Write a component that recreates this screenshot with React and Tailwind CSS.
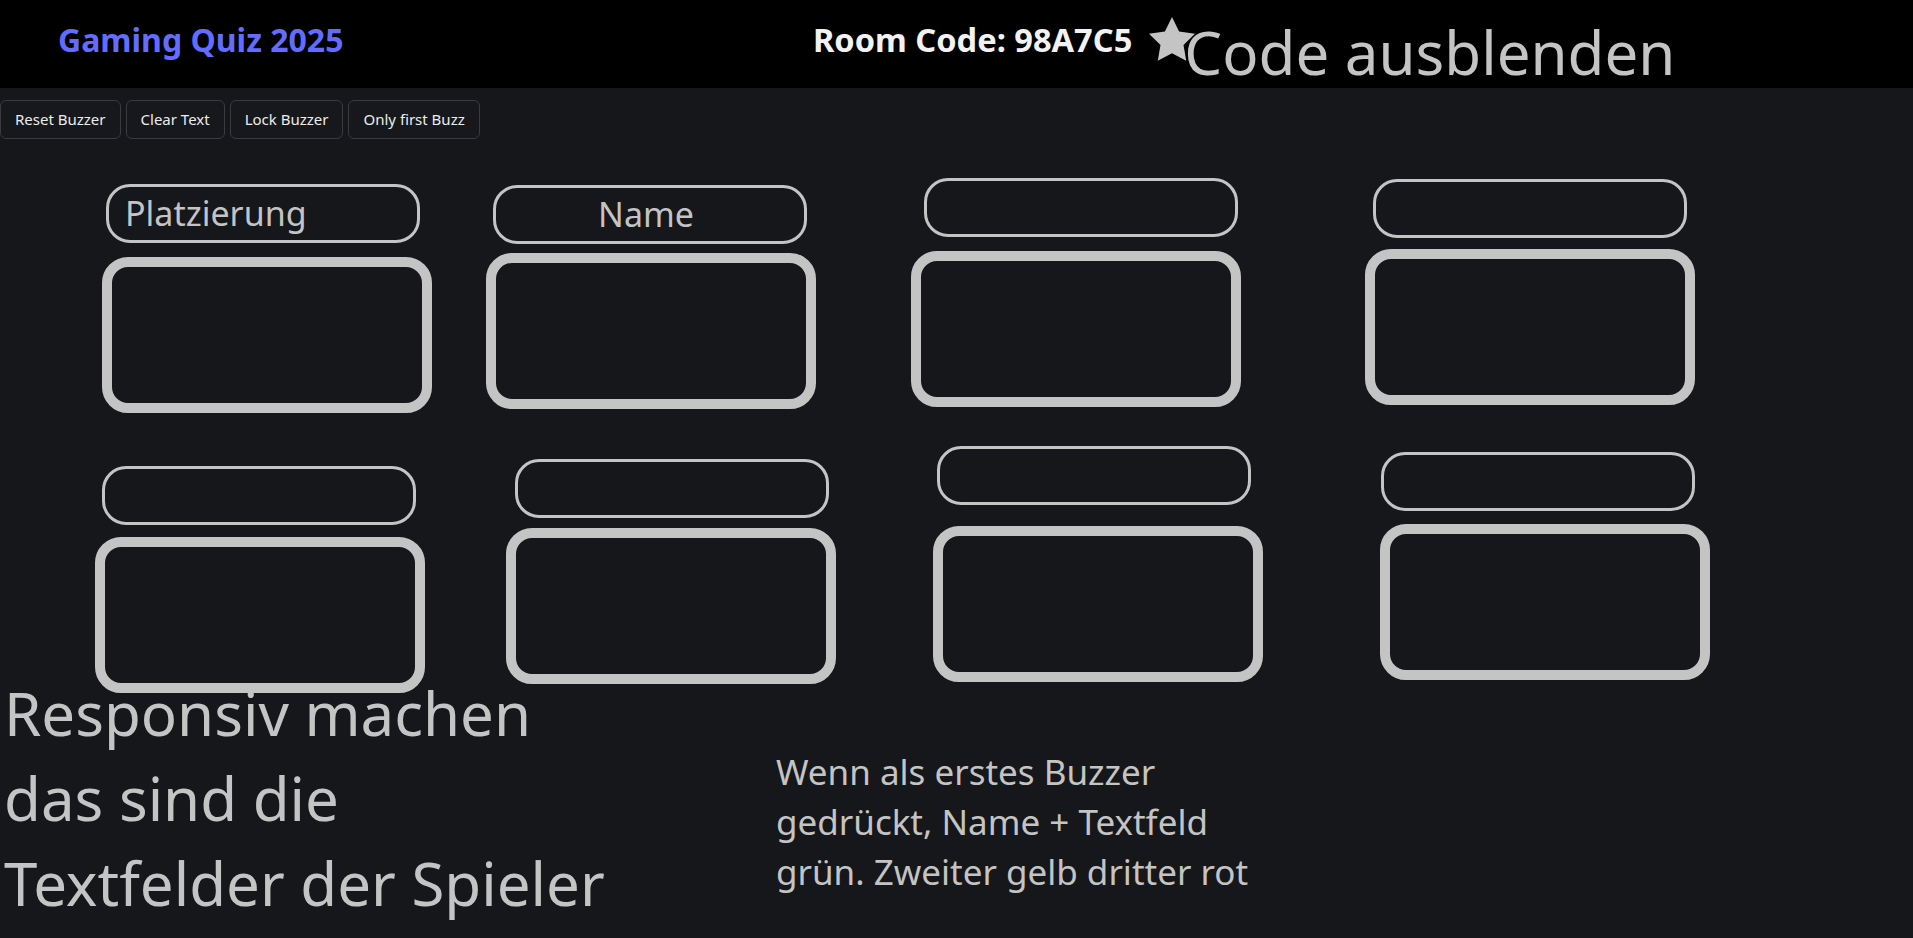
import React from 'react';

const font = { fontFamily: '"Noto Sans", "Open Sans", sans-serif' };

const buttons = ['Reset Buzzer', 'Clear Text', 'Lock Buzzer', 'Only first Buzz'];

// hand placed player fields, two rows of four
const rowOne = [
  { cell: 'ml-[102px]', label: 'mt-[45px] ml-[4px]', box: 'mt-[14px]', text: 'Platzierung', align: 'text-left pl-[16px]' },
  { cell: 'ml-[54px]', label: 'mt-[46px] ml-[7px]', box: 'mt-[9px]', text: 'Name', align: 'text-center pr-[8px]' },
  { cell: 'ml-[95px]', label: 'mt-[39px] ml-[13px]', box: 'mt-[14px]', text: '', align: '' },
  { cell: 'ml-[124px]', label: 'mt-[40px] ml-[8px]', box: 'mt-[11px]', text: '', align: '' },
];

const rowTwo = [
  { cell: 'ml-[95px]', label: 'mt-[53px] ml-[7px]', box: 'mt-[12px]', text: '', align: '' },
  { cell: 'ml-[81px]', label: 'mt-[46px] ml-[9px]', box: 'mt-[10px]', text: '', align: '' },
  { cell: 'ml-[97px]', label: 'mt-[33px] ml-[4px]', box: 'mt-[21px]', text: '', align: '' },
  { cell: 'ml-[117px]', label: 'mt-[39px] ml-[1px]', box: 'mt-[13px]', text: '', align: '' },
];

function Star() {
  return (
    <svg width="46" height="44" viewBox="2 2 20 19.1" className="mt-[17px] ml-[17px] shrink-0">
      <polygon
        points="12,2 15.09,8.26 22,9.27 17,14.14 18.18,21.02 12,17.77 5.82,21.02 7,14.14 2,9.27 8.91,8.26"
        fill="#c4c4c4"
      />
    </svg>
  );
}

function PlayerField({ field }) {
  return (
    <div className={`flex w-[330px] shrink-0 flex-col ${field.cell}`}>
      <div
        className={`h-[59px] w-[314px] rounded-[24px] border-[3px] border-[#c4c4c4] text-[34px] leading-[53px] text-[#c4c4c4] ${field.label} ${field.align}`}
      >
        {field.text}
      </div>
      <div className={`h-[156px] w-[330px] rounded-[26px] border-[10px] border-[#c4c4c4] ${field.box}`}></div>
    </div>
  );
}

export default function App() {
  return (
    <div className="h-[938px] w-[1913px] overflow-hidden bg-[#16171b]" style={font}>
      {/* Header */}
      <div className="flex h-[88px] items-start overflow-visible bg-black">
        <div className="mt-[16px] w-[813px] shrink-0 pl-[58px] text-[32px] font-bold leading-[48px] text-[#646cff]">
          Gaming Quiz 2025
        </div>
        <div className="mt-[16px] shrink-0 text-[32.6px] font-bold leading-[48px] text-[#f2f2f2]">
          Room Code: 98A7C5
        </div>
        <Star />
        <div className="relative z-10 -ml-[11px] mt-[22px] shrink-0 text-[60px] leading-[60px] text-[#c4c4c4]">
          Code ausblenden
        </div>
      </div>

      {/* Controls */}
      <div className="mt-[12px] flex gap-[5px]">
        {buttons.map((b) => (
          <button
            key={b}
            className="h-[39px] rounded-[6px] border border-[#3a3b41] bg-[#17181c] px-[14px] text-[15px] text-[#ececec]"
          >
            {b}
          </button>
        ))}
      </div>

      {/* Player fields */}
      <div className="flex items-start">
        {rowOne.map((f, i) => (
          <PlayerField key={i} field={f} />
        ))}
      </div>
      <div className="flex items-start">
        {rowTwo.map((f, i) => (
          <PlayerField key={i} field={f} />
        ))}
      </div>

      {/* Notes */}
      <div className="-mt-[22px] flex items-start text-[#c4c4c4]">
        <div className="w-[776px] shrink-0 pl-[4px] text-[60px] leading-[85px]">
          Responsiv machen
          <br />
          das sind die
          <br />
          Textfelder der Spieler
        </div>
        <div className="mt-[76px] text-[35px] leading-[50px]">
          Wenn als erstes Buzzer
          <br />
          gedrückt, Name + Textfeld
          <br />
          grün. Zweiter gelb dritter rot
        </div>
      </div>
    </div>
  );
}
